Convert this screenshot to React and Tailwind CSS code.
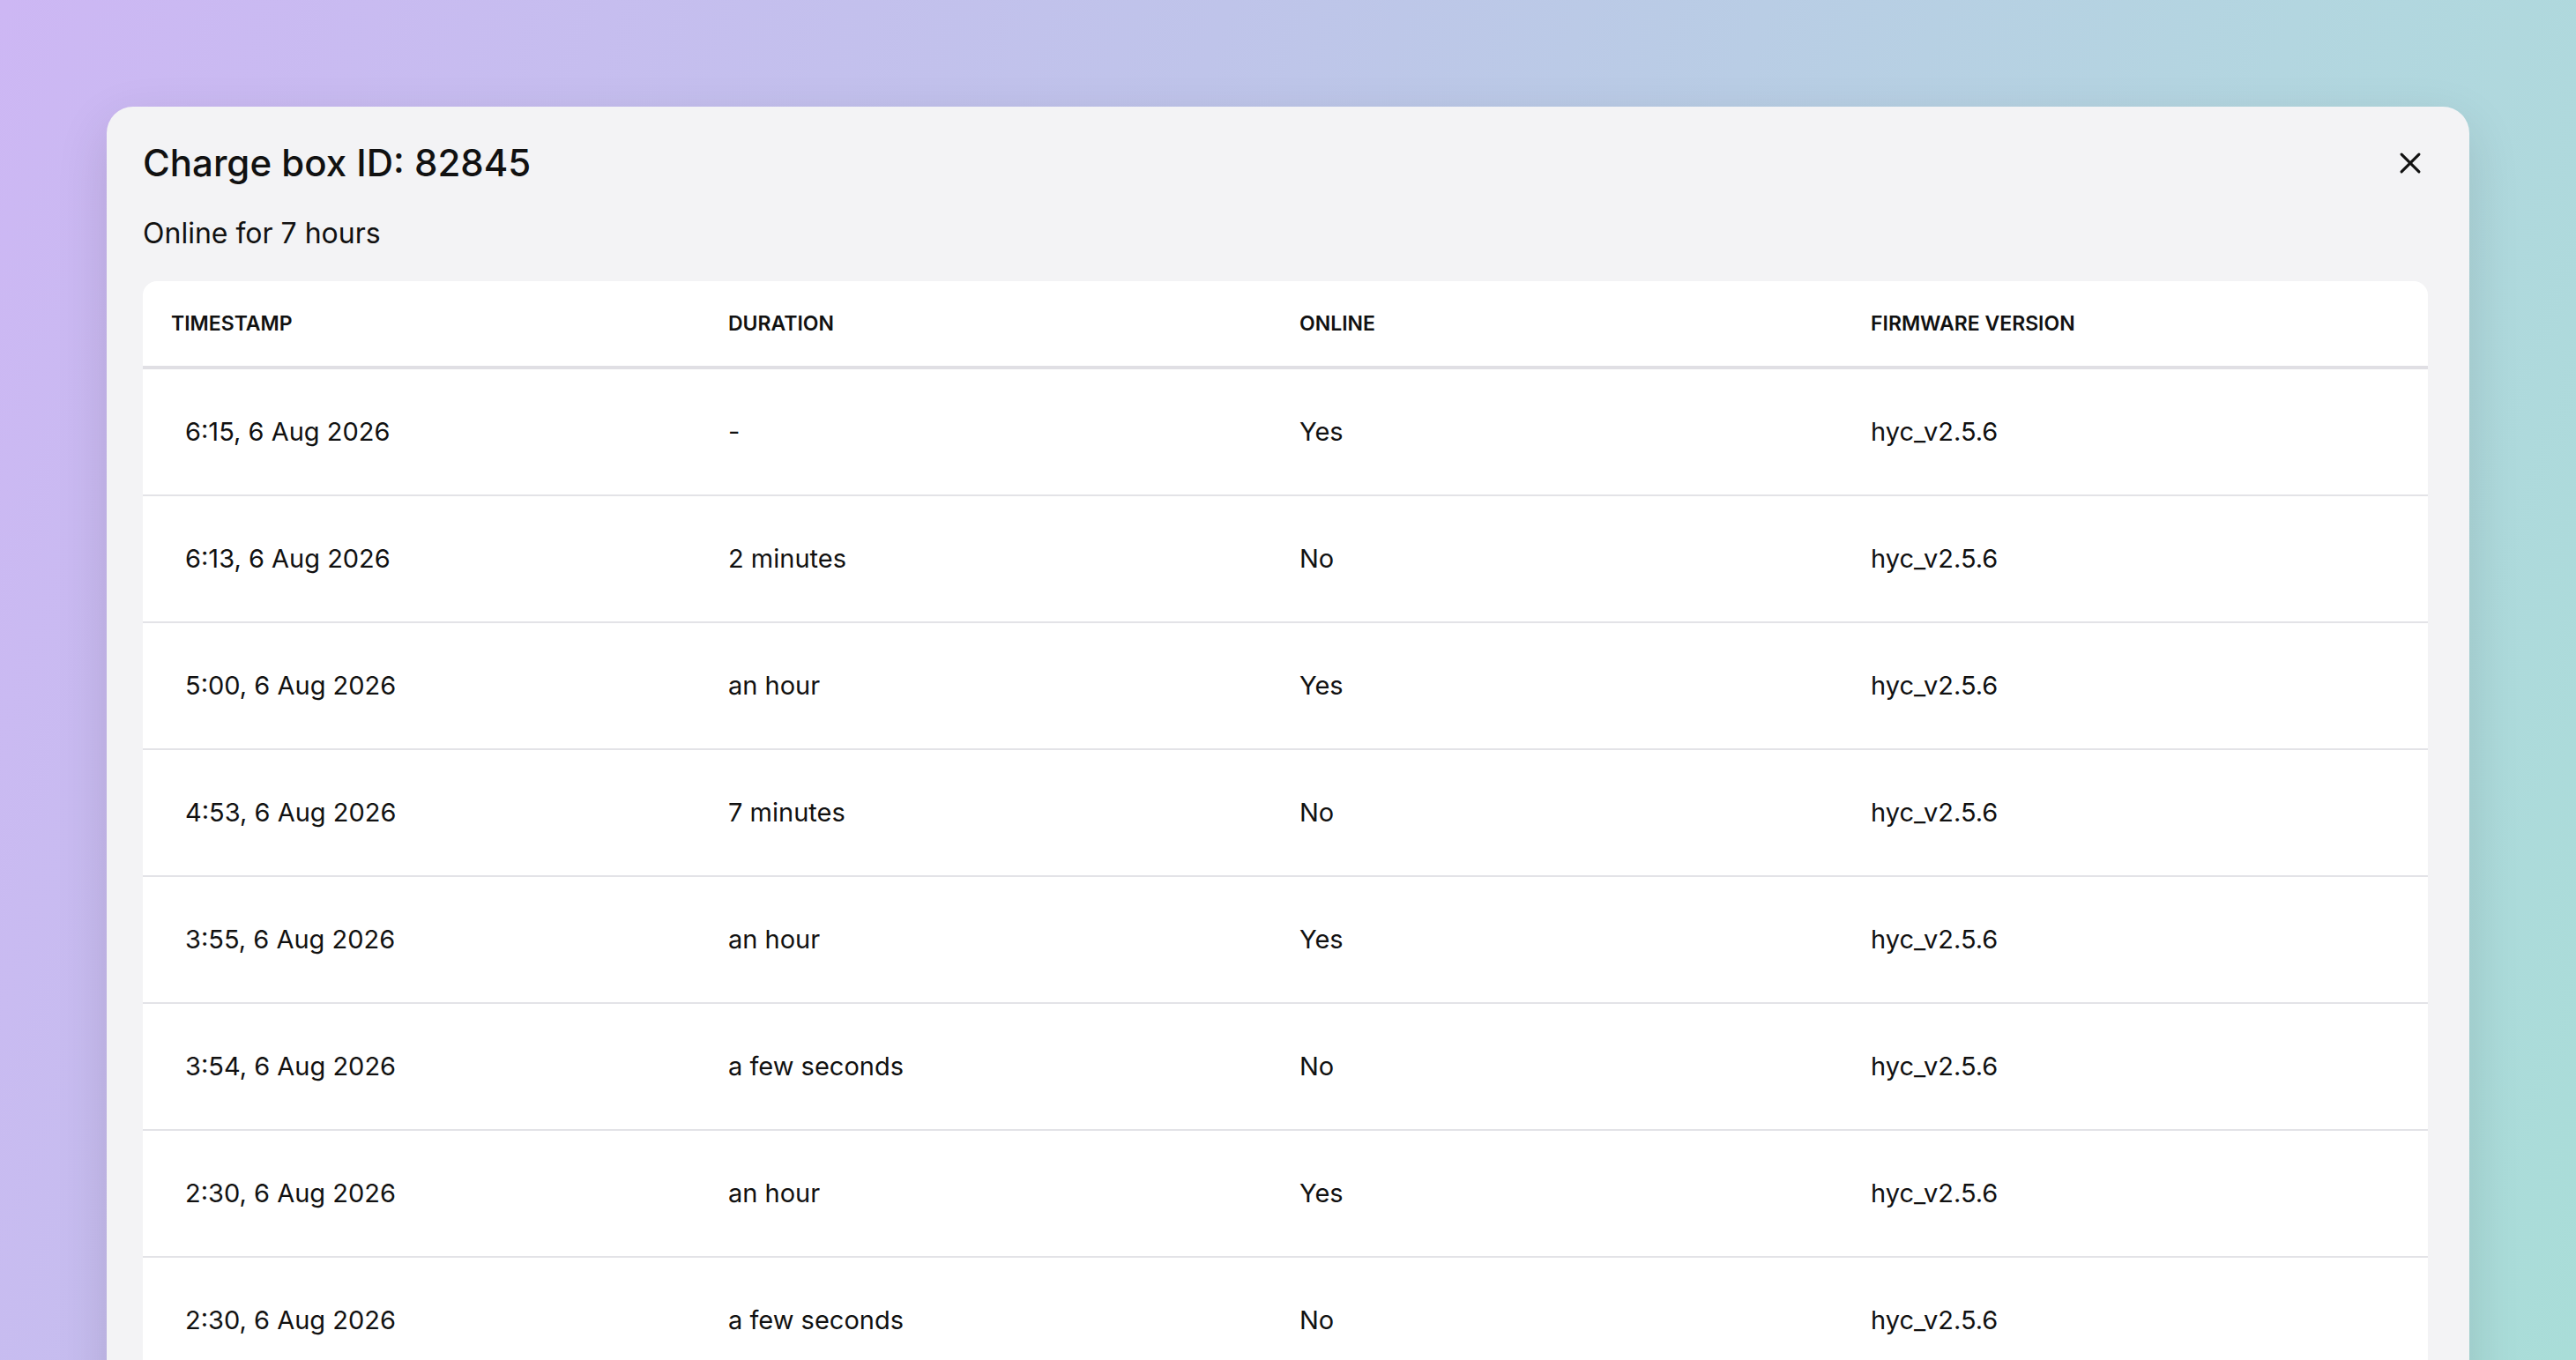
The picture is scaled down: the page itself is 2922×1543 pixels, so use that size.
const rows = [
  ["6:15, 6 Aug 2026", "-", "Yes"],
  ["6:13, 6 Aug 2026", "2 minutes", "No"],
  ["5:00, 6 Aug 2026", "an hour", "Yes"],
  ["4:53, 6 Aug 2026", "7 minutes", "No"],
  ["3:55, 6 Aug 2026", "an hour", "Yes"],
  ["3:54, 6 Aug 2026", "a few seconds", "No"],
  ["2:30, 6 Aug 2026", "an hour", "Yes"],
  ["2:30, 6 Aug 2026", "a few seconds", "No"],
  ["1:10, 6 Aug 2026", "an hour", "Yes"],
];

export default function App() {
  return (
    <div className="h-[1543px] w-full overflow-hidden bg-[linear-gradient(110deg,#cdb7f4_0%,#bfc4ea_40%,#b3d6e0_75%,#a9ddd8_100%)] font-[family-name:Inter,sans-serif] text-[#111]">
      <div className="mx-[121px] mt-[121px] rounded-[30px] bg-[#f3f3f5] pl-[41px] pr-[47px] pt-[36px] shadow-[0_20px_60px_rgba(0,0,0,0.12)]">
        <div className="flex items-center justify-between">
          <h1 className="text-[42px] font-medium leading-[56px]">Charge box ID: 82845</h1>
          <svg width="34" height="34" viewBox="0 0 24 24" fill="none" stroke="#111" strokeWidth="2.2" strokeLinecap="round" className="mr-[3px]">
            <path d="M5 5L19 19M19 5L5 19" />
          </svg>
        </div>
        <p className="mt-[32px] text-[32px] leading-[40px]">Online for 7 hours</p>
        <div className="mt-[34px] rounded-t-[16px] bg-white">
          <div className="grid h-[100px] grid-cols-[632px_648px_648px_1fr] items-center border-b-[4px] border-[#e0dfe4] text-[23px] font-semibold">
            <div className="pl-[32px]">TIMESTAMP</div>
            <div className="pl-[32px]">DURATION</div>
            <div className="pl-[32px]">ONLINE</div>
            <div className="pl-[32px]">FIRMWARE VERSION</div>
          </div>
          {rows.map((r, i) => (
            <div key={i} className="grid h-[144px] grid-cols-[632px_648px_648px_1fr] items-center border-b-[2px] border-[#e3e3e7] text-[29px]">
              <div className="pl-[48px]">{r[0]}</div>
              <div className="pl-[32px]">{r[1]}</div>
              <div className="pl-[32px]">{r[2]}</div>
              <div className="pl-[32px]">hyc_v2.5.6</div>
            </div>
          ))}
        </div>
      </div>
    </div>
  );
}
